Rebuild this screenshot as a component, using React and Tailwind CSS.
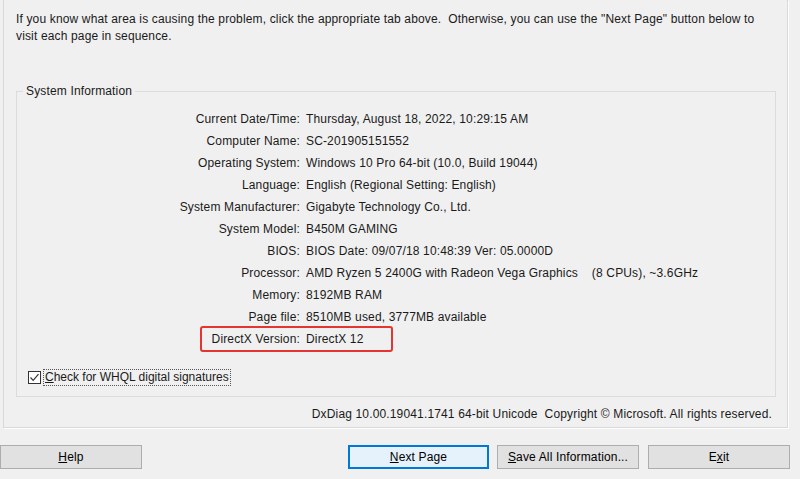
import React from 'react';

const rows = [
  ['Current Date/Time:', 'Thursday, August 18, 2022, 10:29:15 AM'],
  ['Computer Name:', 'SC-201905151552'],
  ['Operating System:', 'Windows 10 Pro 64-bit (10.0, Build 19044)'],
  ['Language:', 'English (Regional Setting: English)'],
  ['System Manufacturer:', 'Gigabyte Technology Co., Ltd.'],
  ['System Model:', 'B450M GAMING'],
  ['BIOS:', 'BIOS Date: 09/07/18 10:48:39 Ver: 05.0000D'],
  ['Processor:', 'AMD Ryzen 5 2400G with Radeon Vega Graphics    (8 CPUs), ~3.6GHz'],
  ['Memory:', '8192MB RAM'],
  ['Page file:', '8510MB used, 3777MB available'],
  ['DirectX Version:', 'DirectX 12'],
];

function Button({ children, primary = false }) {
  return (
    <button
      className={
        primary
          ? 'w-[141px] h-[24px] bg-[#e5f1fb] border-2 border-[#0078d7] text-[12px] text-black flex items-center justify-center'
          : 'w-[142px] h-[24px] bg-[#e1e1e1] border border-[#adadad] text-[12px] text-black flex items-center justify-center'
      }
    >
      {children}
    </button>
  );
}

export default function App() {
  return (
    <div className="w-[800px] h-[479px] bg-[#f0f0f0] overflow-hidden text-[12px] leading-[17px] tracking-[0.15px] text-[#1a1a1a] font-['Liberation_Sans',sans-serif]">
      {/* Tab page */}
      <div className="ml-[3px] w-[785px] h-[428px] border-l border-r border-b border-[#d9d9d9] shadow-[1px_1px_0_#ffffff] pl-[12px] pr-[15px]">
        <p className="pt-[11px]">
          If you know what area is causing the problem, click the appropriate tab above.&nbsp; Otherwise, you can use the "Next Page" button below to
          <br />
          visit each page in sequence.
        </p>

        <fieldset className="mt-[38px] w-[760px] border border-[#dcdcdc] pb-[10px]">
          <legend className="ml-[6px] px-[3px] leading-[17px]">System Information</legend>
          <div className="pt-[8px]">
            {rows.map(([label, value]) => (
              <div key={label} className="relative flex h-[22px] items-center">
                <span className="w-[283px] text-right shrink-0">{label}</span>
                <span className="pl-[6px] whitespace-pre">{value}</span>
                {label === 'DirectX Version:' && (
                  <div className="absolute left-[183px] top-[-2px] w-[193px] h-[26px] border-2 border-[#e53530] rounded-[3px]" />
                )}
              </div>
            ))}
          </div>

          <div className="mt-[19px] ml-[11px] flex items-center h-[17px]">
            <span className="w-[13px] h-[13px] border border-[#333] bg-white flex items-center justify-center">
              <svg width="11" height="11" viewBox="0 0 11 11" fill="none">
                <path d="M1.5 5.5 L4.2 8.3 L9.5 2.2" stroke="#333" strokeWidth="1.2" />
              </svg>
            </span>
            <span className="ml-[2px] px-[1px] border border-dotted border-[#555] leading-[15px] tracking-[0px]">
              <span className="underline">C</span>heck for WHQL digital signatures
            </span>
          </div>
        </fieldset>

        <div className="mt-[9px] text-right">
          DxDiag 10.00.19041.1741 64-bit Unicode&nbsp; Copyright © Microsoft. All rights reserved.
        </div>
      </div>

      {/* Buttons */}
      <div className="mt-[17px] flex items-center">
        <Button>
          <span className="underline">H</span>elp
        </Button>
        <div className="ml-[206px]">
          <Button primary>
            <span className="underline">N</span>ext Page
          </Button>
        </div>
        <div className="ml-[8px]">
          <Button>
            <span className="underline">S</span>ave All Information...
          </Button>
        </div>
        <div className="ml-[9px]">
          <Button>
            E<span className="underline">x</span>it
          </Button>
        </div>
      </div>
    </div>
  );
}
